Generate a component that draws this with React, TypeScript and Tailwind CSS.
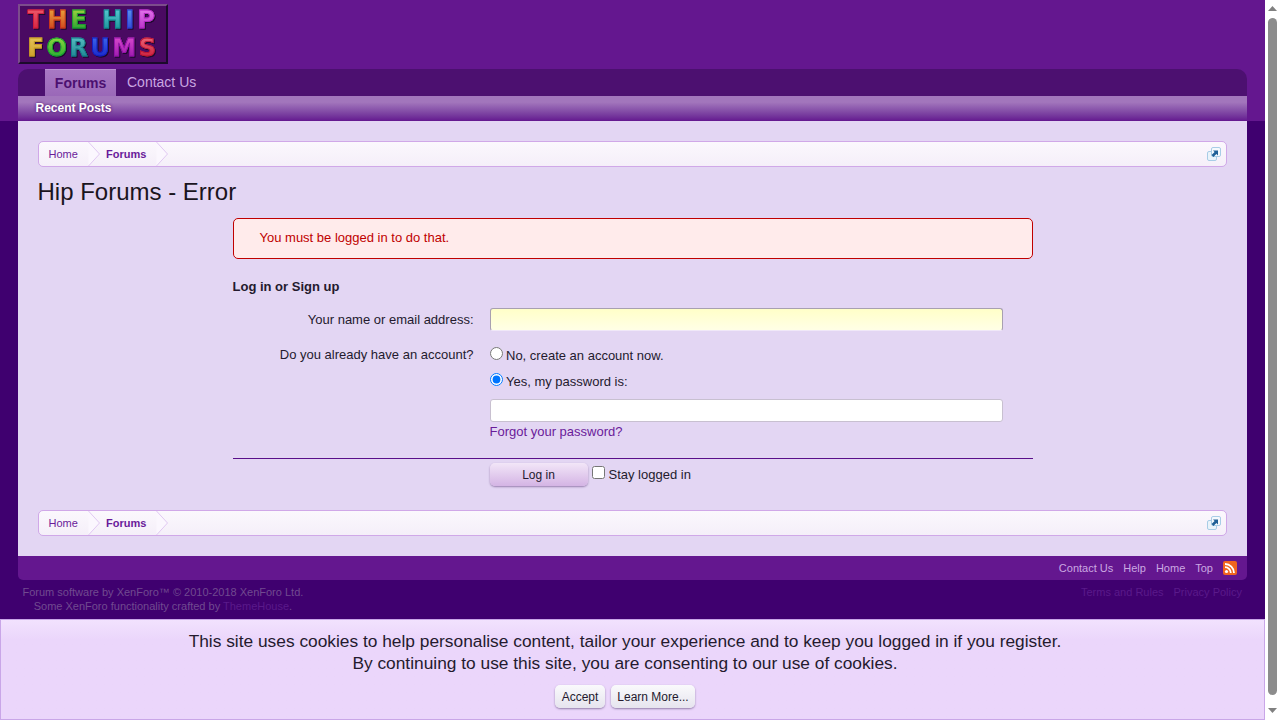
import React from "react";

// per-letter colours of the logo, top to bottom of each glyph
const logoTop = [
  ["T", "#f06070", "#d01838"], ["H", "#f0b040", "#c83018"], ["E", "#b0d840", "#109830"], [" ", "#000", "#000"],
  ["H", "#60d0d8", "#108890"], ["I", "#60a0f0", "#2838d0"], ["P", "#e880f0", "#b020c0"],
];
const logoBottom = [
  ["F", "#e8c860", "#c89820"], ["O", "#a0e040", "#10a030"], ["R", "#60c8c8", "#107888"], ["U", "#4070f0", "#1018c0"],
  ["M", "#e050d0", "#9010a8"], ["S", "#f07080", "#c01030"],
];

const LogoLine = ({ letters, spacing }: { letters: string[][]; spacing: string }) => (
  <div className={`whitespace-pre [filter:drop-shadow(1px_1px_0_#1c0a2c)] ${spacing}`}>
    {letters.map(([c, a, b], i) => (
      <span
        key={i}
        className="bg-clip-text text-transparent"
        style={{ backgroundImage: `linear-gradient(${a}, ${b})`, WebkitTextStroke: `0.8px ${b}` }}
      >
        {c}
      </span>
    ))}
  </div>
);

const Logo = () => (
  <div className="w-[150px] h-[60px] bg-[#4a0a62] border-2 border-t-[#7c4c8c] border-l-[#7c4c8c] border-r-[#1c0a2c] border-b-[#1c0a2c] flex flex-col items-center justify-center font-['DejaVu_Sans',sans-serif] font-bold text-[24px] leading-[28px]">
    <LogoLine letters={logoTop} spacing="tracking-[3.3px]" />
    <LogoLine letters={logoBottom} spacing="tracking-[2.5px]" />
  </div>
);

const Chevron = () => (
  <svg width="12" height="24" viewBox="0 0 12 24" className="shrink-0">
    <path d="M0.5 0 L11.5 12 L0.5 24 Z" fill="#fbf7fe" />
    <path d="M0.5 0 L11.5 12 L0.5 24" fill="none" stroke="#e0c8f2" strokeWidth="1" />
  </svg>
);

const Breadcrumb = () => (
  <div className="h-[26px] ml-5 mr-5 flex items-center rounded-[5px] border border-[#d0a8e8] bg-gradient-to-b from-[#fbf8fd] to-[#f5eff9] text-[11px] text-[#6a1b9a]">
    <span className="pl-[9.5px] w-[49px]">Home</span>
    <Chevron />
    <span className="pl-[6px] w-[56px] font-bold">Forums</span>
    <Chevron />
    <svg width="14" height="14" viewBox="0 0 14 14" className="ml-auto mr-[5px]">
      <rect x="0.5" y="4.5" width="9" height="9" rx="1.5" fill="#eaf3fa" stroke="#a8cde6" />
      <rect x="4.5" y="0.5" width="9" height="9" rx="1.5" fill="#f4f9fd" stroke="#a8cde6" />
      <path d="M6 3.5h5v5l-1.6-1.6-3 3-1.8-1.8 3-3z" fill="#1f5f96" />
    </svg>
  </div>
);

const Scrollbar = () => (
  <div className="w-[15px] h-full bg-white flex flex-col items-center shrink-0">
    <svg width="15" height="17" viewBox="0 0 15 17" className="shrink-0">
      <path d="M3 11 L7.5 6 L12 11 Z" fill="#808080" />
    </svg>
    <div className="w-[9px] flex-1 rounded-full bg-[#8c8c8c] mt-px" />
    <svg width="15" height="25" viewBox="0 0 15 25" className="shrink-0">
      <path d="M3 13 L7.5 18 L12 13 Z" fill="#808080" />
    </svg>
  </div>
);

export default function App() {
  return (
    <div className="relative h-screen overflow-hidden flex font-['Liberation_Sans',Arial,sans-serif] text-[13px] text-[#241a2e]">
      <div className="relative w-[1265px] h-full shrink-0 bg-[#3f006f] overflow-hidden">
        {/* header */}
        <div className="h-[121px] bg-[#64178f] px-[18px] pt-1">
          <Logo />
          <div className="mt-[5px] h-[27px] bg-[#4c1070] rounded-t-[10px] flex items-end pl-[27px] text-[14px]">
            <div className="h-[27px] w-[71px] flex items-center justify-center font-bold text-[#4c1070] bg-gradient-to-b from-[#a878c4] to-[#9a68b8] border-t border-[#b890d0]">
              Forums
            </div>
            <div className="h-[27px] ml-[11px] flex items-center text-[#c9a6e0]">Contact Us</div>
          </div>
          <div className="h-[25px] bg-gradient-to-b from-[#a276bc] from-[25%] to-[#64178f] pl-[17.5px] pb-[2px] flex items-center text-[12px] font-bold text-white [text-shadow:0_0_3px_#4c1070]">
            Recent Posts
          </div>
        </div>

        {/* content */}
        <div className="mx-[18px] h-[435px] bg-[#e3d6f3] pt-5">
          <Breadcrumb />
          <h1 className="ml-[19.5px] mt-[10px] h-[30px] text-[24px] leading-[30px] text-[#1a1420]">Hip Forums - Error</h1>

          <div className="ml-[214.5px] w-[800px] mt-[11px]">
            <div className="h-[41px] rounded-[5px] border border-[#c00000] bg-[#ffebeb] text-[#c00000] pl-[26px] flex items-center pb-[2px]">
              You must be logged in to do that.
            </div>
            <div className="mt-5 h-[16px] leading-[16px] font-bold">Log in or Sign up</div>

            <div className="mt-[13px] flex items-center h-[23px]">
              <div className="w-[241px] text-right">Your name or email address:</div>
              <div className="ml-4 w-[513px] h-[23px] rounded-[3px] border border-[#a8a0b0] border-b-[#f0e8f8] bg-gradient-to-b from-[#ffffc8] to-[#ffffe6]" />
            </div>

            <div className="mt-[16px] flex">
              <div className="w-[241px] text-right -mt-[2px]">Do you already have an account?</div>
              <div className="ml-4 w-[513px]">
                <label className="flex items-center h-[18px]">
                  <input type="radio" name="reg" className="m-0 w-[13px] h-[13px] mt-[-5px]" readOnly />
                  <span className="ml-[3.5px]">No, create an account now.</span>
                </label>
                <label className="flex items-center h-[18px] mt-2">
                  <input type="radio" name="reg" defaultChecked className="m-0 w-[13px] h-[13px] mt-[-5px]" />
                  <span className="ml-[3.5px]">Yes, my password is:</span>
                </label>
                <div className="mt-[8px] h-[23px] rounded-[3px] border border-[#c8c0d0] bg-white" />
                <div className="mt-[2px] h-[16px] leading-[16px] text-[#6a1b9a]">Forgot your password?</div>
              </div>
            </div>

            <div className="mt-[18px] border-t border-[#5a0f8a] pt-[4px] pl-[257px] flex items-center">
              <div className="w-[98px] h-[23px] rounded-[5px] bg-gradient-to-b from-[#f2e6f8] to-[#d4b4e4] shadow-[0_1px_2px_rgba(60,20,90,0.45)] flex items-center justify-center text-[12px]">
                Log in
              </div>
              <input type="checkbox" className="ml-[4.5px] m-0 w-[13px] h-[13px] mt-[-5px]" />
              <span className="ml-[3.5px]">Stay logged in</span>
            </div>
          </div>

          <div className="mt-[24px]">
            <Breadcrumb />
          </div>
        </div>

        {/* footer */}
        <div className="mx-[18px] h-[24px] bg-[#64178f] rounded-b-[5px] flex items-center justify-end pr-[10px] text-[11px] text-[#cba8e2] gap-[10px]">
          <span>Contact Us</span>
          <span>Help</span>
          <span>Home</span>
          <span>Top</span>
          <svg width="14" height="14" viewBox="0 0 14 14">
            <rect width="14" height="14" rx="2" fill="#f0641e" />
            <circle cx="3.5" cy="10.5" r="1.6" fill="#fff" />
            <path d="M2 6.2a5.8 5.8 0 0 1 5.8 5.8M2 3a9 9 0 0 1 9 9" fill="none" stroke="#fff" strokeWidth="1.8" />
          </svg>
        </div>
        <div className="mx-[18px] pt-[5px] pl-[4.5px] pr-[5px] flex justify-between text-[11px] leading-[14px] text-[#714a90]">
          <div className="text-center">
            <div>Forum software by XenForo™ © 2010-2018 XenForo Ltd.</div>
            <div>
              Some XenForo functionality crafted by <span className="text-[#5a1a8a]">ThemeHouse</span>.
            </div>
          </div>
          <div className="flex gap-[10px] text-[#5a1a8a]">
            <span>Terms and Rules</span>
            <span>Privacy Policy</span>
          </div>
        </div>

        {/* cookie notice */}
        <div className="absolute left-0 right-0 bottom-0 h-[101px] border border-[#c9a6e8] bg-gradient-to-b from-[#f2e2fe] to-[#ebd6fb] to-[20%] flex flex-col items-center text-[17.33px] leading-[22px] text-[#241a2e] pt-[10px] pr-[15px]">
          <div>This site uses cookies to help personalise content, tailor your experience and to keep you logged in if you register.</div>
          <div>By continuing to use this site, you are consenting to our use of cookies.</div>
          <div className="mt-[11px] flex gap-[6px] text-[12px] leading-[24px]">
            <div className="h-[23px] w-[50px] text-center rounded-[5px] bg-gradient-to-b from-[#fafafc] to-[#e6e4ee] shadow-[0_1px_2px_rgba(60,40,90,0.5)]">Accept</div>
            <div className="h-[23px] w-[84px] text-center rounded-[5px] bg-gradient-to-b from-[#fafafc] to-[#e6e4ee] shadow-[0_1px_2px_rgba(60,40,90,0.5)]">Learn More...</div>
          </div>
        </div>
      </div>
      <Scrollbar />
    </div>
  );
}
